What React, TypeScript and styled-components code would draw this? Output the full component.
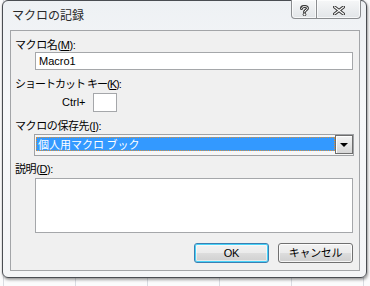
import React, { FC } from 'react'
import styled, { createGlobalStyle } from 'styled-components'

const GlobalStyle = createGlobalStyle`
  html, body {
    margin: 0;
    padding: 0;
  }
  body {
    width: 370px;
    height: 286px;
    overflow: hidden;
    font-family: 'Liberation Sans', 'Noto Sans CJK JP', sans-serif;
    color: #000;
  }
`

const Desktop = styled.div`
  width: 370px;
  height: 286px;
  box-sizing: border-box;
  padding-left: 2px;
  background-color: #fbfbfc;
  background-image: linear-gradient(to right, #d9dce2 1px, transparent 1px);
  background-size: 72px 100%;
  background-position: 3px 0;
`

const Window = styled.div`
  width: 365px;
  height: 278px;
  box-sizing: border-box;
  border: 1px solid #4a4d52;
  border-radius: 6px;
  background: linear-gradient(to bottom, #eef1f4 0%, #f7f8fa 40%, #f4f5f7 100%);
  box-shadow: 1px 2px 3px rgba(0, 0, 0, 0.35), 0 0 2px rgba(0, 0, 0, 0.2);
  display: flex;
  flex-direction: column;
`

const TitleBar = styled.div`
  height: 29px;
  display: flex;
  align-items: flex-start;
  padding-left: 9px;
  padding-right: 5px;
`

const Title = styled.div`
  font-family: 'Noto Sans CJK JP', sans-serif;
  font-size: 12px;
  line-height: 14px;
  padding-top: 7px;
  color: #2a2a2a;
`

const Captions = styled.div`
  margin-left: auto;
  margin-top: -1px;
  display: flex;
`

const CaptionButton = styled.div<{ wide?: boolean; first?: boolean }>`
  width: ${(p) => (p.wide ? 44 : 26)}px;
  height: 19px;
  box-sizing: border-box;
  border: 1px solid #8b8d90;
  border-top: none;
  border-left-width: ${(p) => (p.first ? 1 : 0)}px;
  border-radius: ${(p) => (p.first ? '0 0 0 4px' : '0 0 4px 0')};
  background: linear-gradient(to bottom, #f6f7f8 0%, #eceef0 50%, #e2e5e8 100%);
  box-shadow: inset 0 0 0 1px rgba(255, 255, 255, 0.7);
  display: flex;
  align-items: center;
  justify-content: center;
  padding-top: 2px;
`

const Client = styled.div`
  margin: 0 6px 0 7px;
  height: 241px;
  box-sizing: border-box;
  border: 1px solid #a3a5a8;
  background: #f0f0f0;
  padding: 7px 6px 0 4px;
  display: flex;
  flex-direction: column;
  font-family: 'Liberation Sans', 'Noto Sans CJK JP', sans-serif;
  font-size: 11px;
`

const Label = styled.div<{ top?: number; tight?: boolean }>`
  height: 14px;
  line-height: 14px;
  margin-top: ${(p) => p.top ?? 0}px;
  white-space: nowrap;
  letter-spacing: ${(p) => (p.tight ? -1 : -0.4)}px;

  u {
    text-decoration-thickness: 1px;
    text-underline-offset: 1px;
  }
`

const TextBox = styled.div<{ top?: number; h: number }>`
  margin-top: ${(p) => p.top ?? 0}px;
  margin-left: 20px;
  width: 318px;
  height: ${(p) => p.h}px;
  box-sizing: border-box;
  border: 1px solid #a5a7aa;
  background: #fff;
  padding-left: 3px;
  line-height: 16px;
`

const ShortcutRow = styled.div`
  margin-top: 2px;
  height: 19px;
  display: flex;
  align-items: center;
  padding-left: 47px;
`

const CtrlText = styled.span`
  width: 31px;
  line-height: 19px;
`

const KeyBox = styled.div`
  width: 24px;
  height: 19px;
  box-sizing: border-box;
  border: 1px solid #a5a7aa;
  background: #fff;
`

const Combo = styled.div`
  margin-top: 1px;
  margin-left: 19px;
  width: 320px;
  height: 22px;
  box-sizing: border-box;
  border: 1px solid #a0a2a5;
  background: #f6f6f6;
  display: flex;
`

const ComboValue = styled.div`
  flex: 1;
  margin: 2px 0 0 1px;
  height: 14px;
  box-sizing: border-box;
  border: 1px dotted #d9903a;
  background: #3399ff;
  color: #fff;
  font-family: 'Noto Sans CJK JP', sans-serif;
  font-size: 11px;
  line-height: 12px;
  padding-left: 1px;
  white-space: nowrap;
  overflow: hidden;
`

const ComboButton = styled.div`
  width: 18px;
  height: 19px;
  box-sizing: border-box;
  border: 1px solid #6e6e6e;
  box-shadow: inset 1px 1px 0 #fff;
  background: linear-gradient(to bottom, #f4f4f4 0%, #e6e6e6 50%, #d6d6d6 100%);
  display: flex;
  align-items: center;
  justify-content: center;
  padding-top: 1px;
`

const Arrow = styled.div`
  width: 0;
  height: 0;
  border-left: 4px solid transparent;
  border-right: 4px solid transparent;
  border-top: 4px solid #000;
`

const ButtonRow = styled.div`
  margin-top: 10px;
  display: flex;
  justify-content: flex-end;
  gap: 9px;
`

const Button = styled.div<{ primary?: boolean }>`
  width: 75px;
  height: 20px;
  box-sizing: border-box;
  border: 1px solid ${(p) => (p.primary ? '#3c7fb1' : '#707070')};
  border-radius: 3px;
  background: linear-gradient(
    to bottom,
    #f2f2f2 0%,
    #ebebeb 50%,
    #dddddd 51%,
    #cfcfcf 100%
  );
  box-shadow: ${(p) =>
    p.primary
      ? 'inset 0 0 0 1px #48d2f8, inset 0 0 0 2px rgba(255,255,255,0.5)'
      : 'inset 0 0 0 1px rgba(255,255,255,0.8)'};
  display: flex;
  align-items: center;
  justify-content: center;
  font-size: 11px;
  line-height: 18px;
  letter-spacing: -0.3px;
`

const HelpGlyph: FC = () => (
  <svg width="9" height="11" viewBox="0 0 9 11">
    <path
      d="M1.5 3.5 C1.5 0.8 7.5 0.8 7.5 3.3 C7.5 5 4.5 5 4.5 7"
      fill="none"
      stroke="#3a3a3a"
      strokeWidth="3"
      strokeLinecap="round"
    />
    <path
      d="M1.5 3.5 C1.5 0.8 7.5 0.8 7.5 3.3 C7.5 5 4.5 5 4.5 7"
      fill="none"
      stroke="#fff"
      strokeWidth="1"
      strokeLinecap="round"
    />
    <circle cx="4.5" cy="9.5" r="1.4" fill="#fff" stroke="#3a3a3a" strokeWidth="1" />
  </svg>
)

const CloseGlyph: FC = () => (
  <svg width="12" height="9" viewBox="0 0 12 9">
    <path d="M1.5 1 L10.5 8 M10.5 1 L1.5 8" stroke="#3a3a3a" strokeWidth="3.2" strokeLinecap="square" />
    <path d="M1.5 1 L10.5 8 M10.5 1 L1.5 8" stroke="#fff" strokeWidth="1.2" strokeLinecap="square" />
  </svg>
)

const App: FC = () => {
  return (
    <>
      <GlobalStyle />
      <Desktop>
        <Window>
          <TitleBar>
            <Title>マクロの記録</Title>
            <Captions>
              <CaptionButton first>
                <HelpGlyph />
              </CaptionButton>
              <CaptionButton wide>
                <CloseGlyph />
              </CaptionButton>
            </Captions>
          </TitleBar>
          <Client>
            <Label>
              マクロ名(<u>M</u>):
            </Label>
            <TextBox h={18}>Macro1</TextBox>
            <Label top={7} tight>
              ショートカット キー(<u>K</u>):
            </Label>
            <ShortcutRow>
              <CtrlText>Ctrl+</CtrlText>
              <KeyBox />
            </ShortcutRow>
            <Label top={7}>
              マクロの保存先(<u>I</u>):
            </Label>
            <Combo>
              <ComboValue>個人用マクロ ブック</ComboValue>
              <ComboButton>
                <Arrow />
              </ComboButton>
            </Combo>
            <Label top={6}>
              説明(<u>D</u>):
            </Label>
            <TextBox top={2} h={55} />
            <ButtonRow>
              <Button primary>OK</Button>
              <Button>キャンセル</Button>
            </ButtonRow>
          </Client>
        </Window>
      </Desktop>
    </>
  )
}

export default App
